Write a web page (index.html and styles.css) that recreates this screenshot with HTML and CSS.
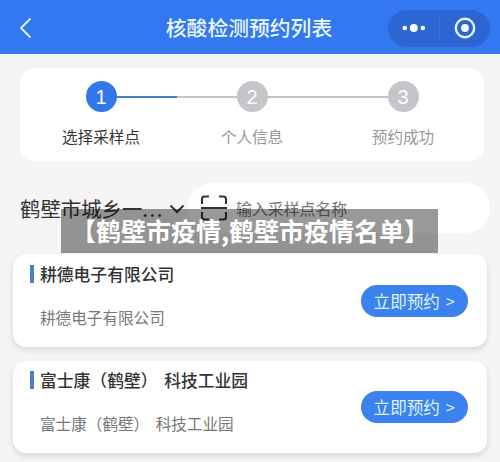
FILE: index.html
```
<!DOCTYPE html>
<html lang="zh-CN">
<head>
<meta charset="utf-8">
<title>核酸检测预约列表</title>
<link rel="stylesheet" href="styles.css">
</head>
<body>
<header class="navbar">
  <svg class="back" width="14" height="22" viewBox="0 0 14 22"><path d="M11.500 1.500 2 11l9.500 9.500"/></svg>
  <h1 class="nav-title">核酸检测预约列表</h1>
  <div class="capsule">
    <svg width="24" height="10" viewBox="0 0 24 10"><circle cx="2.800" cy="5" r="2.300"/><circle cx="11.800" cy="5" r="4"/><circle cx="20.800" cy="5" r="2.300"/></svg>
    <span class="divider"></span>
    <svg width="22" height="22" viewBox="0 0 22 22"><circle class="ring" cx="11" cy="11" r="9.200"/><circle cx="11" cy="11" r="3.900"/></svg>
  </div>
</header>
<main>
  <ol class="steps">
    <li class="step active"><span class="num">1</span><span class="label">选择采样点</span></li>
    <li class="step"><span class="num">2</span><span class="label">个人信息</span></li>
    <li class="step"><span class="num">3</span><span class="label">预约成功</span></li>
  </ol>
  <section class="filter">
    <div class="region"><span class="place">鹤壁市城乡一<span class="dots">...</span></span><svg class="chevron" width="16" height="10" viewBox="0 0 16 10"><path d="M1.500 1.500 8 8l6.500-6.500"/></svg></div>
    <div class="search">
      <svg class="scan" width="28" height="26" viewBox="0 0 28 26"><path d="M2 9V4q0-2.500 2.500-2.500H9M19 1.500h4.500Q26 1.500 26 4v5M1 13h26M2 17v5q0 2.500 2.500 2.500H9M19 24.500h4.500Q26 24.500 26 22v-5"/></svg>
      <span>输入采样点名称</span>
    </div>
    <div class="banner">【鹤壁市疫情,鹤壁市疫情名单】</div>
  </section>
  <article class="card">
    <div class="info"><h2>耕德电子有限公司</h2><p>耕德电子有限公司</p></div>
    <button class="book">立即预约 <span>&gt;</span></button>
  </article>
  <article class="card">
    <div class="info"><h2>富士康（鹤壁） 科技工业园</h2><p>富士康（鹤壁） 科技工业园</p></div>
    <button class="book">立即预约 <span>&gt;</span></button>
  </article>
</main>
</body>
</html>
```
FILE: styles.css
```
* { box-sizing: border-box; margin: 0; padding: 0; }
body {
  height: 462px;
  overflow: hidden;
  background: #f5f5f6;
  font-family: "Noto Sans CJK SC", sans-serif;
  color: #333;
}
svg { display: block; flex: none; }
.navbar {
  height: 54px;
  display: grid;
  grid-template-columns: 111px 1fr 112px;
  align-items: center;
  background: #3377f1;
  padding-top: 2px;
}
.back { margin-left: 19px; fill: none; stroke: #e4f5ff; stroke-width: 1.800; }
.nav-title {
  text-align: center;
  margin-right: 1px;
  font-size: 20.800px;
  line-height: 28px;
  padding-bottom: 2px;
  font-weight: 500;
  color: #e8f8fc;
  white-space: nowrap;
}
.capsule {
  width: 102px;
  height: 37px;
  border-radius: 19px;
  background: #2c66d2;
  display: flex;
  align-items: center;
  padding-left: 14px;
  fill: #f2fbff;
}
.divider { width: 1px; height: 24px; margin: 0 14px 0 13px; background: #3d72d2; }
.ring { fill: none; stroke: #e6f6ff; stroke-width: 2.400; }
.steps {
  list-style: none;
  display: grid;
  grid-template-columns: repeat(3, 151px);
  justify-content: center;
  height: 93px;
  margin: 14px 16px 0 20px;
  padding-top: 13px;
  border-radius: 15px;
  background: #fff;
}
.step {
  display: grid;
  grid-template-columns: 1fr 31px 1fr;
  grid-template-rows: 31px 1fr;
  align-items: center;
}
.step::before, .step::after { content: ""; height: 2px; margin-top: 1px; background: #c5c5c9; grid-row: 1; }
.step::before { grid-column: 1; }
.step::after { grid-column: 3; }
.step:first-child::before, .step:last-child::after { visibility: hidden; }
.step.active::after { background: #4680bd; }
.num {
  grid-area: 1 / 2;
  height: 31px;
  border-radius: 50%;
  background: #c5c5c9;
  color: #fff;
  font-family: "Liberation Sans", sans-serif;
  font-size: 20px;
  line-height: 32px;
  text-align: center;
}
.active .num { background: #3378ea; }
.label {
  grid-area: 2 / 1 / 3 / 4;
  align-self: start;
  margin-top: 12px;
  text-align: center;
  font-size: 15.600px;
  line-height: 24px;
  color: #999;
}
.active .label { color: #333; }
.filter {
  position: relative;
  display: flex;
  height: 50px;
  margin: 22px 10px 0 20px;
}
.region {
  width: 168px;
  display: flex;
  align-items: center;
  font-size: 20.400px;
  line-height: 50px;
  white-space: nowrap;
}
.place { width: 149px; }
.dots { letter-spacing: 1.500px; }
.chevron { fill: none; stroke: #333; stroke-width: 2; margin-top: 2px; }
.search {
  flex: 1;
  display: flex;
  align-items: center;
  gap: 8px;
  padding-left: 12px;
  border-radius: 25px;
  background: #fff;
  font-size: 15.900px;
  color: #777;
}
.scan { fill: none; stroke: #333; stroke-width: 2; }
.banner {
  position: absolute;
  left: 41px;
  top: 26px;
  width: 377px;
  height: 44px;
  background: rgba(0, 0, 0, .4);
  color: #fff;
  font-size: 25px;
  font-weight: 700;
  line-height: 43px;
  text-align: center;
  text-indent: 1px;
  white-space: nowrap;
}
.card {
  height: 93px;
  margin: 21px 13px 0;
  padding: 0 19.500px 0 17px;
  display: flex;
  justify-content: space-between;
  border-radius: 13px;
  background: #fff;
  box-shadow: 0 3px 6px rgba(0, 0, 0, .12);
}
.card + .card { margin-top: 14px; height: 92px; }
.card + .card h2 { margin-top: 10px; }
.card + .card .book { margin-top: 30px; }
h2 {
  margin-top: 11px;
  border-left: 4px solid #4d7fc9;
  padding-left: 6px;
  font-size: 16.800px;
  line-height: 18px;
  font-weight: 500;
  word-spacing: 3px;
  white-space: nowrap;
}
p {
  margin: 22px 0 0 10px;
  font-size: 15.600px;
  line-height: 24px;
  color: #777;
  word-spacing: 3px;
  white-space: nowrap;
}
.book {
  width: 106.500px;
  height: 32px;
  margin-top: 31px;
  border: 0;
  border-radius: 16px;
  background: #3b82ef;
  color: #def4fa;
  font: 16.600px/32px "Noto Sans CJK SC", sans-serif;
  white-space: nowrap;
}
.book span { margin-left: 2px; }
```
